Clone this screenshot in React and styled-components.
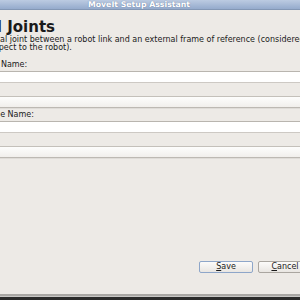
import React from "react";
import styled, { createGlobalStyle } from "styled-components";

const GlobalStyle = createGlobalStyle`
  html, body {
    margin: 0;
    padding: 0;
    width: 300px;
    height: 300px;
    overflow: hidden;
    background: #2b2b2b;
  }
  #root {
    width: 300px;
    height: 300px;
    overflow: hidden;
  }
`;

const Screen = styled.div`
  display: flex;
  flex-direction: column;
  width: 388px;
  height: 300px;
  margin-left: -55px;
  font-family: "DejaVu Sans", "Liberation Sans", sans-serif;
  color: #1a1a1a;
`;

const Window = styled.div`
  display: flex;
  flex-direction: column;
  height: 294px;
  background: #edeae6;
  border-bottom: 2px solid #a9a7a4;
`;

const Shade = styled.div`
  height: 1px;
  background: #c9c8c6;
`;

const TitleBar = styled.div`
  height: 9px;
  display: flex;
  align-items: center;
  justify-content: center;
  background: linear-gradient(#bccbe2, #95abcc);
  border-bottom: 1px solid #8397b5;
  color: #ffffff;
  font-weight: bold;
  font-size: 7.8px;
  line-height: 9px;
  text-shadow: 0 0 1px rgba(40, 60, 100, 0.6);
  white-space: nowrap;
`;

const Content = styled.div`
  flex: 1;
  display: flex;
  flex-direction: column;
`;

const Heading = styled.h1`
  margin: 8px 0 0 0;
  font-size: 15px;
  line-height: 18px;
  font-weight: bold;
  white-space: nowrap;
`;

const Description = styled.p`
  margin: 0;
  font-size: 8px;
  line-height: 8px;
  white-space: nowrap;
`;

const Form = styled.div`
  display: flex;
  flex-direction: column;
  margin-top: 6px;
  padding-left: 7px;
`;

const Label = styled.div`
  height: 13px;
  font-size: 8px;
  line-height: 13px;
  white-space: nowrap;
`;

const TextInput = styled.div`
  box-sizing: border-box;
  height: 12px;
  background: #ffffff;
  border-top: 1px solid #b9b5af;
  border-bottom: 1px solid #cdc9c4;
`;

const Combo = styled.div`
  box-sizing: border-box;
  height: 12px;
  background: linear-gradient(#fdfdfc, #f1efec);
  border-top: 1px solid #c4c0ba;
  border-bottom: 1px solid #bdb9b3;
  box-shadow: 0 1px 0 rgba(0, 0, 0, 0.06);
`;

const ButtonRow = styled.div`
  display: flex;
  justify-content: flex-end;
  gap: 5px;
  padding: 0 21px 21px 0;
`;

const Button = styled.button`
  box-sizing: border-box;
  width: 54px;
  height: 12px;
  padding: 0;
  border: 1px solid ${(p) => (p.$default ? "#8ea6c9" : "#aaa6a0")};
  border-radius: 2px;
  background: linear-gradient(#fcfbfa, #e9e6e2);
  font-family: "DejaVu Sans", "Liberation Sans", sans-serif;
  font-size: 8px;
  line-height: 10px;
  color: #1a1a1a;
  u {
    text-decoration: underline;
  }
`;

const Desktop = styled.div`
  flex: 1;
  background: #2b2b2b;
`;

export default function App() {
  return (
    <>
      <GlobalStyle />
      <Screen>
        <Window>
          <TitleBar>MoveIt Setup Assistant</TitleBar>
          <Content>
            <Heading>Virtual Joints</Heading>
            <Description>
              Create a virtual joint between a robot link and an external frame of reference (considered
              <br />
              fixed with respect to the robot).
            </Description>
            <Form>
              <Label>Virtual Joint Name:</Label>
              <TextInput />
              <Label>Child Link:</Label>
              <Combo />
              <Label>Parent Frame Name:</Label>
              <TextInput />
              <Label>Joint Type:</Label>
              <Combo />
            </Form>
          </Content>
          <ButtonRow>
            <Button $default>
              <u>S</u>ave
            </Button>
            <Button>
              <u>C</u>ancel
            </Button>
          </ButtonRow>
        </Window>
        <Shade />
        <Desktop />
      </Screen>
    </>
  );
}
